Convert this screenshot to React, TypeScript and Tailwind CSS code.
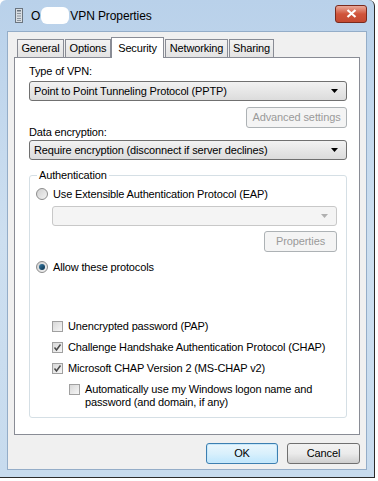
import React from "react";

const font = { fontFamily: '"Liberation Sans", Arial, sans-serif' };
const txt = "text-[11px] tracking-[-0.15px] text-black";

function Combo({ text, disabled }: { text?: string; disabled?: boolean }) {
  return (
    <div
      className={`flex h-[20px] items-center justify-between rounded-[3px] border pl-[4px] pr-[8px] ${
        disabled
          ? "border-[#c8c8c8] bg-[#f4f4f4]"
          : "border-[#707070] bg-gradient-to-b from-[#f2f2f2] to-[#dcdcdc]"
      }`}
    >
      <span className={`${txt} leading-none`}>{text}</span>
      <svg width="7" height="4" viewBox="0 0 7 4">
        <path d="M0 0h7L3.5 4z" fill={disabled ? "#b0b0b0" : "#000"} />
      </svg>
    </div>
  );
}

function Btn({ label, disabled, w, def }: { label: string; disabled?: boolean; w: string; def?: boolean }) {
  return (
    <div
      className={`${w} flex h-[21px] items-center justify-center rounded-[3px] border text-[11px] tracking-[-0.1px] ${
        disabled
          ? "border-[#adb2b5] bg-[#f4f4f4] text-[#9a9a9a]"
          : def
          ? "border-[#3c7fb1] bg-gradient-to-b from-[#eaf6fd] via-[#d9f0fc] to-[#bee6fd] text-black shadow-[inset_0_0_0_1px_#c8e8fa]"
          : "border-[#707070] bg-gradient-to-b from-[#f2f2f2] via-[#ebebeb] to-[#cfcfcf] text-black"
      }`}
    >
      {label}
    </div>
  );
}

function Check({ checked, label }: { checked?: boolean; label: React.ReactNode }) {
  return (
    <div className="flex items-start gap-[5px]">
      <div className="mt-[1px] flex h-[11px] w-[11px] shrink-0 items-center justify-center border border-[#a0a0a0] bg-gradient-to-br from-[#d8d8d8] to-[#f6f6f6]">
        {checked && (
          <svg width="9" height="9" viewBox="0 0 9 9">
            <path d="M1.5 4.5l2 2.5 4-5.5" stroke="#4a4a4a" strokeWidth="1.5" fill="none" />
          </svg>
        )}
      </div>
      <div className={`${txt} leading-[13px]`}>{label}</div>
    </div>
  );
}

function Radio({ checked, label }: { checked?: boolean; label: string }) {
  return (
    <div className="flex items-center gap-[5px]">
      <div className="flex h-[12px] w-[12px] items-center justify-center rounded-full border border-[#8c8c8c] bg-gradient-to-br from-[#d0d0d0] to-[#f4f4f4]">
        {checked && (
          <div className="h-[6px] w-[6px] rounded-full bg-gradient-to-br from-[#3a80aa] to-[#0a2f4a]" />
        )}
      </div>
      <span className={`${txt} leading-none`}>{label}</span>
    </div>
  );
}

function Tab({ label, w, ml }: { label: string; w: string; ml: string }) {
  return (
    <div
      className={`${w} ${ml} flex h-[18px] items-center justify-center border border-b-0 border-[#898c95] bg-gradient-to-b from-[#f3f3f3] to-[#e3e3e3] ${txt}`}
    >
      {label}
    </div>
  );
}

export default function App() {
  return (
    <div className="relative h-[481px] w-[378px] overflow-hidden bg-white" style={font}>
      <div className="flex h-[478px] w-[375px] flex-col rounded-tl-[6px] rounded-tr-[6px] border-r border-b border-[#2b2b2b] bg-gradient-to-b from-[#b9d1ea] via-[#cddff0] to-[#c7dbee]">
        {/* title bar */}
        <div className="flex h-[31px] items-center pl-[15px] pr-[7px]">
          <svg width="8" height="15" viewBox="0 0 8 15" className="mr-[8px]">
            <rect x="0.5" y="0.5" width="7" height="14" fill="#d8dde2" stroke="#6b7580" />
            <rect x="2" y="2" width="4" height="1.5" fill="#6b7580" />
            <rect x="2" y="5" width="4" height="1" fill="#8a949e" />
            <rect x="2" y="7.5" width="4" height="1" fill="#8a949e" />
            <rect x="2" y="10" width="4" height="1" fill="#8a949e" />
            <rect x="2" y="12" width="4" height="1" fill="#8a949e" />
          </svg>
          <span className="text-[12px] text-black">O</span>
          <span className="mx-[1px] h-[17px] w-[28px] rounded-[6px] bg-white" />
          <span className="text-[12px] tracking-[-0.1px] text-black">VPN Properties</span>
          <div className="mb-[4px] ml-auto flex h-[18px] w-[32px] items-center justify-center rounded-[3px] border border-[#7a2a1d] bg-gradient-to-b from-[#e9a99a] via-[#d0543b] to-[#c44a32]">
            <svg width="11" height="9" viewBox="0 0 11 9">
              <path d="M1.5 1l8 7M9.5 1l-8 7" stroke="#fff" strokeWidth="2.2" />
            </svg>
          </div>
        </div>
        {/* body */}
        <div className="mx-[7px] mb-[7px] flex flex-1 flex-col border border-[#94adc8] bg-[#f0f0f0] px-[6px] pt-[4px]">
          {/* tabs */}
          <div className="flex h-[21px] items-end pl-[3px]">
            <Tab label="General" w="w-[47px]" ml="ml-0" />
            <Tab label="Options" w="w-[46px]" ml="ml-[1px]" />
            <div className="relative z-10 -mb-[1px] ml-[0px] flex h-[21px] w-[53px] items-start justify-center border border-b-0 border-[#898c95] bg-white pt-[2px]">
              <span className={txt}>Security</span>
            </div>
            <Tab label="Networking" w="w-[63px]" ml="ml-[1px]" />
            <Tab label="Sharing" w="w-[45px]" ml="ml-[1px]" />
          </div>
          {/* panel */}
          <div className="flex h-[378px] flex-col border border-[#898c95] bg-white pl-[14px] pr-[12px] pt-[6px]">
            <div className={`${txt} leading-[14px]`}>Type of VPN:</div>
            <div className="mt-[3px]">
              <Combo text="Point to Point Tunneling Protocol (PPTP)" />
            </div>
            <div className="mt-[6px] flex justify-end">
              <Btn label="Advanced settings" disabled w="w-[101px]" />
            </div>
            <div className={`${txt} -mt-[2px] leading-[12px]`}>Data encryption:</div>
            <div className="mt-[2px]">
              <Combo text="Require encryption (disconnect if server declines)" />
            </div>
            {/* group box */}
            <div className="relative mt-[15px] h-[243px] rounded-[3px] border border-[#d5dfe5]">
              <span className={`${txt} absolute -top-[8px] left-[7px] bg-white px-[2px] leading-[14px]`}>
                Authentication
              </span>
              <div className="flex flex-col pl-[6px] pr-[9px] pt-[12px]">
                <Radio label="Use Extensible Authentication Protocol (EAP)" />
                <div className="ml-[16px] mt-[6px]">
                  <Combo disabled />
                </div>
                <div className="mt-[5px] flex justify-end">
                  <Btn label="Properties" disabled w="w-[73px]" />
                </div>
                <div className="mt-[9px]">
                  <Radio checked label="Allow these protocols" />
                </div>
                <div className="ml-[16px] mt-[47px] flex flex-col gap-[8px]">
                  <Check label="Unencrypted password (PAP)" />
                  <Check checked label="Challenge Handshake Authentication Protocol (CHAP)" />
                  <Check checked label="Microsoft CHAP Version 2 (MS-CHAP v2)" />
                  <div className="ml-[17px]">
                    <Check
                      label={
                        <>
                          Automatically use my Windows logon name and
                          <br />
                          password (and domain, if any)
                        </>
                      }
                    />
                  </div>
                </div>
              </div>
            </div>
          </div>
          {/* buttons */}
          <div className="mt-[8px] flex justify-end gap-[9px]">
            <Btn label="OK" def w="w-[72px]" />
            <Btn label="Cancel" w="w-[73px]" />
          </div>
        </div>
      </div>
    </div>
  );
}
